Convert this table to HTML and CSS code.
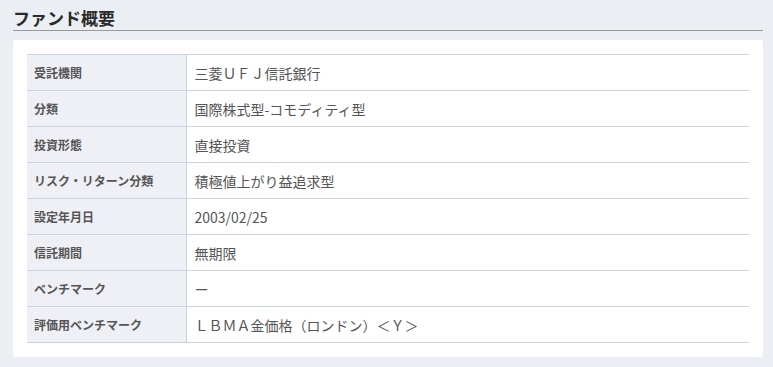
FILE: index.html
```html
<!DOCTYPE html>
<html lang="ja">
<head>
  <meta charset="UTF-8">
  <title>ファンド概要</title>
  <link rel="stylesheet" href="styles.css">
</head>
<body>
  <section class="fund-summary">
    <h2 class="section-title">ファンド概要</h2>
    <div class="card">
      <table class="summary-table">
        <tr><th>受託機関</th><td>三菱ＵＦＪ信託銀行</td></tr>
        <tr><th>分類</th><td>国際株式型-コモディティ型</td></tr>
        <tr><th>投資形態</th><td>直接投資</td></tr>
        <tr><th>リスク・リターン分類</th><td>積極値上がり益追求型</td></tr>
        <tr><th>設定年月日</th><td>2003/02/25</td></tr>
        <tr><th>信託期間</th><td>無期限</td></tr>
        <tr><th>ベンチマーク</th><td>ー</td></tr>
        <tr><th>評価用ベンチマーク</th><td>ＬＢＭＡ金価格（ロンドン）＜Ｙ＞</td></tr>
      </table>
    </div>
  </section>
</body>
</html>
```

FILE: styles.css
```css
* {
  box-sizing: border-box;
  margin: 0;
  padding: 0;
}
body {
  font-family: "Noto Sans CJK JP", "Noto Sans", sans-serif;
  background: #ebeef2;
  color: #555;
  padding: 0 10px 0 13px;
}
.fund-summary {
  width: 750px;
}
/* Heading with grey rule underneath */
.section-title {
  font-size: 17px;
  font-weight: bold;
  color: #2a2a2a;
  line-height: 24px;
  padding-top: 6px;
  border-bottom: 1px solid #999;
  margin-bottom: 9px;
}
.card {
  background: #fff;
  border-radius: 3px;
  padding: 14px;
}
.summary-table {
  width: 100%;
  border-collapse: collapse;
}
.summary-table th,
.summary-table td {
  height: 36px;
  border-top: 1px solid #c9d4e1;
  border-bottom: 1px solid #c9d4e1;
  text-align: left;
  vertical-align: middle;
}
.summary-table th {
  width: 159px;
  background: #eef0f5;
  border-right: 1px solid #c9d4e1;
  font-size: 12px;
  font-weight: bold;
  color: #555;
  padding: 0 7px;
}
.summary-table td {
  font-size: 14px;
  color: #555;
  padding: 0 8px;
}
```
